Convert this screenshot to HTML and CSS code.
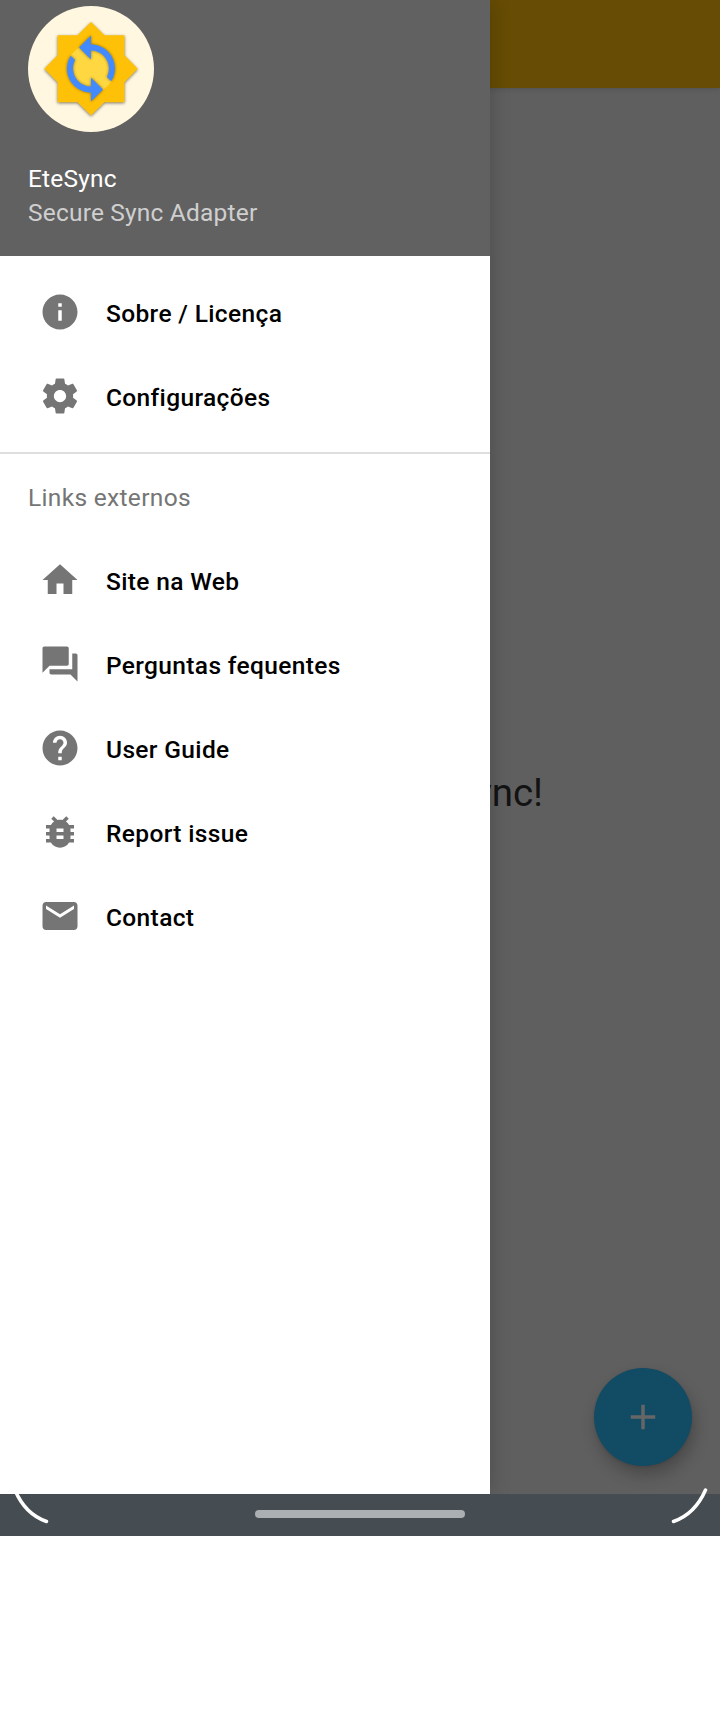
FILE: index.html
```html
<!DOCTYPE html>
<html lang="pt">
<head>
<meta charset="utf-8">
<title>EteSync</title>
<link rel="stylesheet" href="styles.css">
</head>
<body>
<div class="phone">
  <div class="screen">
    <header class="app-bar"></header>
    <main class="content">
      <p class="welcome">EteSync!</p>
      <button class="fab" aria-label="+">
        <svg viewBox="0 0 24 24"><path d="M19 13h-6v6h-2v-6H5v-2h6V5h2v6h6v2z"/></svg>
      </button>
    </main>
    <aside class="drawer">
      <div class="drawer-header">
        <svg class="avatar" viewBox="0 0 126 126">
          <circle class="avatar-bg" cx="63" cy="63" r="63"/>
          <path class="star" d="M63 16 76.5 29.2H96.5V49.2L109.7 62.7 96.5 76.2V96.2H76.5L63 109.4 49.5 96.2H29.5V76.2L16.3 62.7 29.5 49.2V29.2H49.5Z"/>
          <circle class="star-center" cx="63" cy="62.7" r="24"/>
          <path class="sync" transform="translate(27 26.5) scale(3)" d="M12 4V1L8 5l4 4V6c3.31 0 6 2.69 6 6 0 1.01-.25 1.97-.7 2.8l1.46 1.46C19.54 15.03 20 13.57 20 12c0-4.42-3.58-8-8-8zm0 14c-3.31 0-6-2.69-6-6 0-1.01.25-1.97.7-2.8L5.24 7.74C4.46 8.97 4 10.43 4 12c0 4.42 3.58 8 8 8v3l4-4-4-4v3z"/>
        </svg>
        <div class="title">EteSync</div>
        <div class="subtitle">Secure Sync Adapter</div>
      </div>
      <nav class="menu">
        <a class="item"><svg viewBox="0 0 24 24"><path d="M12 2C6.48 2 2 6.48 2 12s4.48 10 10 10 10-4.48 10-10S17.52 2 12 2zm1 15h-2v-6h2v6zm0-8h-2V7h2v2z"/></svg><span>Sobre / Licença</span></a>
        <a class="item"><svg viewBox="0 0 24 24"><path d="M19.43 12.98c.04-.32.07-.64.07-.98s-.03-.66-.07-.98l2.11-1.65c.19-.15.24-.42.12-.64l-2-3.46c-.12-.22-.39-.3-.61-.22l-2.49 1c-.52-.4-1.08-.73-1.69-.98l-.38-2.65C14.46 2.18 14.25 2 14 2h-4c-.25 0-.46.18-.49.42l-.38 2.65c-.61.25-1.17.59-1.69.98l-2.49-1c-.23-.09-.49 0-.61.22l-2 3.46c-.13.22-.07.49.12.64l2.11 1.65c-.04.32-.07.65-.07.98s.03.66.07.98l-2.11 1.65c-.19.15-.24.42-.12.64l2 3.46c.12.22.39.3.61.22l2.49-1c.52.4 1.08.73 1.69.98l.38 2.65c.03.24.24.42.49.42h4c.25 0 .46-.18.49-.42l.38-2.65c.61-.25 1.17-.59 1.69-.98l2.49 1c.23.09.49 0 .61-.22l2-3.46c.12-.22.07-.49-.12-.64l-2.11-1.65zM12 15.5c-1.93 0-3.5-1.57-3.5-3.5s1.57-3.5 3.5-3.5 3.5 1.57 3.5 3.5-1.57 3.5-3.5 3.5z"/></svg><span>Configurações</span></a>
        <div class="section">Links externos</div>
        <a class="item"><svg viewBox="0 0 24 24"><path d="M10 20v-6h4v6h5v-8h3L12 3 2 12h3v8z"/></svg><span>Site na Web</span></a>
        <a class="item"><svg viewBox="0 0 24 24"><path d="M21 6h-2v9H6v2c0 .55.45 1 1 1h11l4 4V7c0-.55-.45-1-1-1zm-4 6V3c0-.55-.45-1-1-1H3c-.55 0-1 .45-1 1v14l4-4h10c.55 0 1-.45 1-1z"/></svg><span>Perguntas fequentes</span></a>
        <a class="item"><svg viewBox="0 0 24 24"><path d="M12 2C6.48 2 2 6.48 2 12s4.48 10 10 10 10-4.48 10-10S17.52 2 12 2zm1 17h-2v-2h2v2zm2.07-7.75l-.9.92C13.45 12.9 13 13.5 13 15h-2v-.5c0-1.1.45-2.1 1.17-2.83l1.24-1.26c.37-.36.59-.86.59-1.41 0-1.1-.9-2-2-2s-2 .9-2 2H8c0-2.21 1.79-4 4-4s4 1.79 4 4c0 .88-.36 1.68-.93 2.25z"/></svg><span>User Guide</span></a>
        <a class="item"><svg viewBox="0 0 24 24"><path d="M20 8h-2.81c-.45-.78-1.07-1.45-1.82-1.96L17 4.41 15.59 3l-2.17 2.17C12.96 5.06 12.49 5 12 5c-.49 0-.96.06-1.41.17L8.41 3 7 4.41l1.62 1.63C7.88 6.55 7.26 7.22 6.81 8H4v2h2.09c-.05.33-.09.66-.09 1v1H4v2h2v1c0 .34.04.67.09 1H4v2h2.81c1.04 1.79 2.97 3 5.19 3s4.15-1.21 5.19-3H20v-2h-2.09c.05-.33.09-.66.09-1v-1h2v-2h-2v-1c0-.34-.04-.67-.09-1H20V8zm-6 8h-4v-2h4v2zm0-4h-4v-2h4v2z"/></svg><span>Report issue</span></a>
        <a class="item"><svg viewBox="0 0 24 24"><path d="M20 4H4c-1.1 0-1.99.9-1.99 2L2 18c0 1.1.9 2 2 2h16c1.1 0 2-.9 2-2V6c0-1.1-.9-2-2-2zm0 4l-8 5-8-5V6l8 5 8-5v2z"/></svg><span>Contact</span></a>
      </nav>
    </aside>
  </div>
  <footer class="nav-bar">
    <div class="handle"></div>
    <svg class="corners" viewBox="0 0 720 46"><path d="M15 0Q25 24 46.5 31.5M705.5 0Q695 24 673.5 31.5"/></svg>
  </footer>
</div>
</body>
</html>
```
FILE: styles.css
```css
body {
  margin: 0;
  background: #fff;
  font-family: Roboto, "Liberation Sans", sans-serif;
  font-size: 24.5px;
}

.phone {
  width: 720px;
  height: 1536px;
  display: flex;
  flex-direction: column;
}

.screen {
  position: relative;
  flex: 1;
  display: flex;
  flex-direction: column;
  overflow: hidden;
  background: #5f5f5f;
}

.app-bar {
  height: 88px;
  background: #664c04;
  box-shadow: 0 1px 5px rgba(0, 0, 0, 0.14);
}

.content {
  flex: 1;
  display: flex;
  flex-direction: column;
  justify-content: space-between;
  align-items: flex-end;
  padding: 682px 28px 28px 0;
}

.welcome {
  margin: 0 149px 0 0;
  font-size: 38.5px;
  line-height: 46px;
  color: #131313;
}

.fab {
  display: flex;
  align-items: center;
  justify-content: center;
  width: 98px;
  height: 98px;
  padding: 0;
  border: 0;
  border-radius: 50%;
  background: #114b64;
  box-shadow: 3px 9px 16px rgba(0, 0, 0, 0.24), 0 1px 3px rgba(0, 0, 0, 0.1);
}

.fab svg {
  width: 42px;
  height: 42px;
  fill: #666;
}

.drawer {
  position: absolute;
  inset: 0 auto 0 0;
  width: 490px;
  background: #fff;
  box-shadow: 0 0 20px rgba(0, 0, 0, 0.2);
}

.drawer-header {
  box-sizing: border-box;
  height: 256px;
  padding: 6px 28px 0;
  background: #616161;
}

.avatar {
  display: block;
  width: 126px;
  height: 126px;
  margin-bottom: 30px;
}

.avatar-bg { fill: #fff7e0; }
.star {
  fill: #ffc107;
  filter: drop-shadow(0 1.5px 1.8px rgba(0, 0, 0, 0.5));
}
.star-center { fill: #ffd740; }
.sync {
  fill: #448aff;
  filter: drop-shadow(0 0.5px 0.5px rgba(0, 0, 0, 0.45));
}

.title,
.subtitle {
  line-height: 34px;
  letter-spacing: 0.19px;
}

.title { color: #fff; }
.subtitle { color: #cfcfcf; }

.menu {
  padding-top: 14px;
}

.item {
  display: flex;
  align-items: center;
  gap: 25px;
  height: 84px;
  padding-left: 39px;
  font-weight: 500;
  letter-spacing: 0.36px;
  color: #000;
}

.item svg {
  width: 42px;
  height: 42px;
  fill: #757575;
}

.item span {
  padding-top: 3px;
}

.section {
  margin-top: 14px;
  padding: 3px 28px 0;
  border-top: 2px solid #dedede;
  line-height: 81px;
  letter-spacing: 0.32px;
  color: #757575;
}

.nav-bar {
  position: relative;
  display: flex;
  align-items: center;
  justify-content: center;
  height: 42px;
  background: #454d52;
}

.handle {
  width: 210px;
  height: 8px;
  margin-bottom: 2px;
  border-radius: 4px;
  background: #abafb1;
}

.corners {
  position: absolute;
  top: -4px;
  left: 0;
  width: 720px;
  height: 46px;
  fill: none;
  stroke: #fff;
  stroke-width: 3.5;
  stroke-linecap: round;
  overflow: visible;
}
```
